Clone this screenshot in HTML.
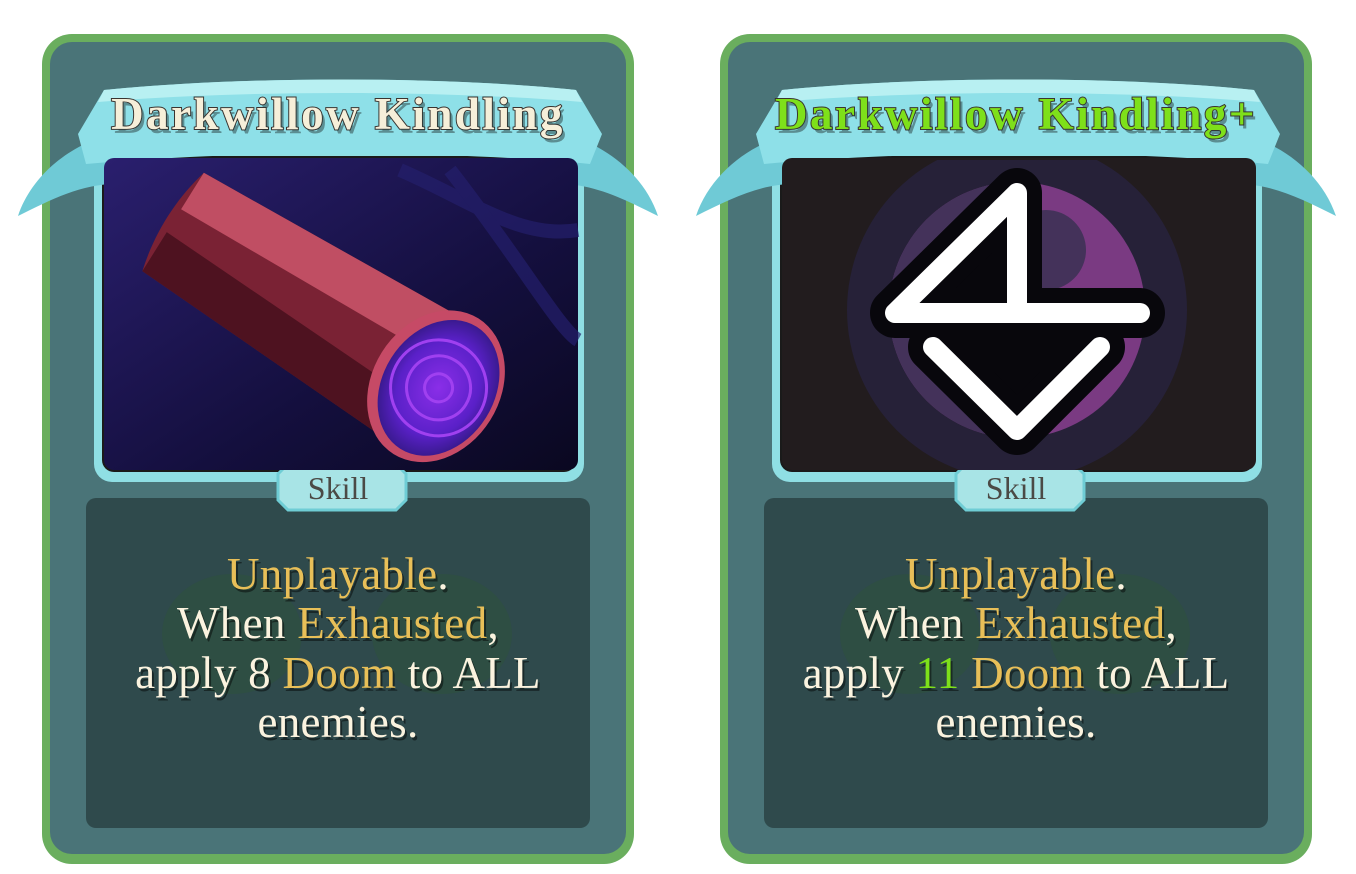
<!DOCTYPE html>
<html><head><meta charset="utf-8"><style>
html,body{margin:0;padding:0;background:#fff;width:1356px;height:874px;overflow:hidden;position:relative}
.card{position:absolute;top:34px;width:592px;height:830px}
.t{position:absolute;left:0;width:100%;text-align:center;font-family:"Liberation Serif",serif;font-size:45px;color:#fbf3df;text-shadow:2px 3px 0 rgba(0,0,0,.45);line-height:50px;letter-spacing:0.3px}
.g{color:#e8bf58}.n{color:#7ee01a}
.title{position:absolute;left:0;width:100%;top:54px;text-align:center;font-family:"Liberation Serif",serif;font-weight:bold;font-size:45px;letter-spacing:2.5px;-webkit-text-stroke:2px #3a3430;paint-order:stroke fill;text-shadow:3px 4px 0 rgba(40,60,60,.5)}
.skill{position:absolute;left:0;width:100%;top:436px;text-align:center;font-family:"Liberation Serif",serif;font-size:32px;color:#4b4a46}
</style></head><body>

<svg width="1356" height="874" style="position:absolute;left:0;top:0">
<defs>
<linearGradient id="art1" x1="0" y1="0" x2="1" y2="1"><stop offset="0" stop-color="#2a1f6e"/><stop offset=".6" stop-color="#140f3e"/><stop offset="1" stop-color="#0a0820"/></linearGradient>
<radialGradient id="glow" cx=".5" cy=".5" r=".5"><stop offset="0" stop-color="#8a2ee8"/><stop offset=".7" stop-color="#5a20c8"/><stop offset="1" stop-color="#3a1a90"/></radialGradient>
<clipPath id="c2"><rect x="782" y="160" width="474" height="310" rx="10"/></clipPath>
<g id="frame">
 <rect x="0" y="0" width="592" height="830" rx="30" fill="#6aae5e"/>
 <rect x="8" y="8" width="576" height="812" rx="22" fill="#4a7478"/>
 <rect x="44" y="464" width="504" height="330" rx="10" fill="#2f4a4c"/>
 <ellipse cx="190" cy="600" rx="70" ry="60" fill="#2e5040" opacity=".7"/>
 <ellipse cx="400" cy="600" rx="70" ry="60" fill="#2e5040" opacity=".7"/>
 <rect x="52" y="112" width="490" height="336" rx="18" fill="#8fdfe4"/>
 <rect x="60" y="122" width="474" height="316" rx="12" fill="#1a1a1a"/>
 <path d="M236 440 L246 430 L354 430 L364 440 L364 466 L354 476 L246 476 L236 466Z" fill="#a8e4e6" stroke="#6fcdd5" stroke-width="3"/>
 <path d="M-24 182 C-10 140 30 110 70 100 L74 150 C40 150 10 165 -24 182Z" fill="#6fcad6"/>
 <path d="M616 182 C602 140 562 110 522 100 L518 150 C552 150 582 165 616 182Z" fill="#6fcad6"/>
 <path d="M62 56 C200 42 400 42 534 56 L560 100 L548 130 C400 116 200 116 44 130 L36 100Z" fill="#8ee0e8"/>
 <path d="M62 56 C200 42 400 42 534 56 L540 68 C400 56 200 56 56 68Z" fill="#b8f0f2"/>
</g>
</defs>
<use href="#frame" x="42" y="34"/>
<use href="#frame" x="720" y="34"/>
<rect x="104" y="158" width="474" height="312" rx="10" fill="url(#art1)"/>
<g fill="none" stroke="#241f6c" stroke-width="14" opacity=".7">
 <path d="M400 170 C470 200 520 240 578 230"/>
 <path d="M450 170 C520 260 560 330 578 340"/>
</g>
<g transform="translate(330,320) rotate(32)">
 <path d="M-185 -58 C-195 -20 -195 20 -185 58 L120 72 L120 -72Z" fill="#7a2234"/>
 <path d="M-185 -58 L120 -72 L120 -24 L-185 -15Z" fill="#c04e63"/>
 <path d="M-185 12 L120 24 L120 72 L-185 58Z" fill="#4e1220"/>
 <ellipse cx="125" cy="0" rx="64" ry="80" fill="#c64a66"/>
 <ellipse cx="128" cy="0" rx="56" ry="72" fill="url(#glow)"/>
 <g fill="none" stroke="#a040f0" stroke-width="3"><circle cx="128" cy="0" r="14"/><circle cx="128" cy="0" r="32"/><circle cx="128" cy="0" r="48"/></g>
</g>
<rect x="782" y="158" width="474" height="312" rx="10" fill="#221c1e"/>
<g clip-path="url(#c2)">
<circle cx="1017" cy="310" r="170" fill="#262138"/>
<circle cx="1017" cy="310" r="128" fill="#7a3a82"/>
<path d="M1017 182 A128 128 0 0 0 1017 438Z" fill="#44325a"/>
<circle cx="1046" cy="250" r="40" fill="#44325a"/>
<g stroke-linejoin="round" stroke-linecap="round">
 <path d="M1017 193 L1017 313 L895 313Z M895 313 L1140 313 M933 347 L1017 430 L1100 347Z" fill="#08070c" stroke="#08070c" stroke-width="50"/>
 <path d="M1017 193 L1017 313 M895 313 L1017 193 M895 313 L1140 313 M933 347 L1017 430 L1100 347" fill="none" stroke="#fff" stroke-width="20"/>
</g>
</g>
</svg>

<div class="card" style="left:42px">
 <div class="title" style="color:#f6efd9">Darkwillow Kindling</div>
 <div class="skill">Skill</div>
 <div class="t" style="top:515px"><span class="g">Unplayable</span>.</div>
 <div class="t" style="top:564px">When <span class="g">Exhausted</span>,</div>
 <div class="t" style="top:614px">apply 8 <span class="g">Doom</span> to ALL</div>
 <div class="t" style="top:663px">enemies.</div>
</div>
<div class="card" style="left:720px">
 <div class="title" style="color:#7ee01a">Darkwillow Kindling+</div>
 <div class="skill">Skill</div>
 <div class="t" style="top:515px"><span class="g">Unplayable</span>.</div>
 <div class="t" style="top:564px">When <span class="g">Exhausted</span>,</div>
 <div class="t" style="top:614px">apply <span class="n">11</span> <span class="g">Doom</span> to ALL</div>
 <div class="t" style="top:663px">enemies.</div>
</div>
</body></html>
